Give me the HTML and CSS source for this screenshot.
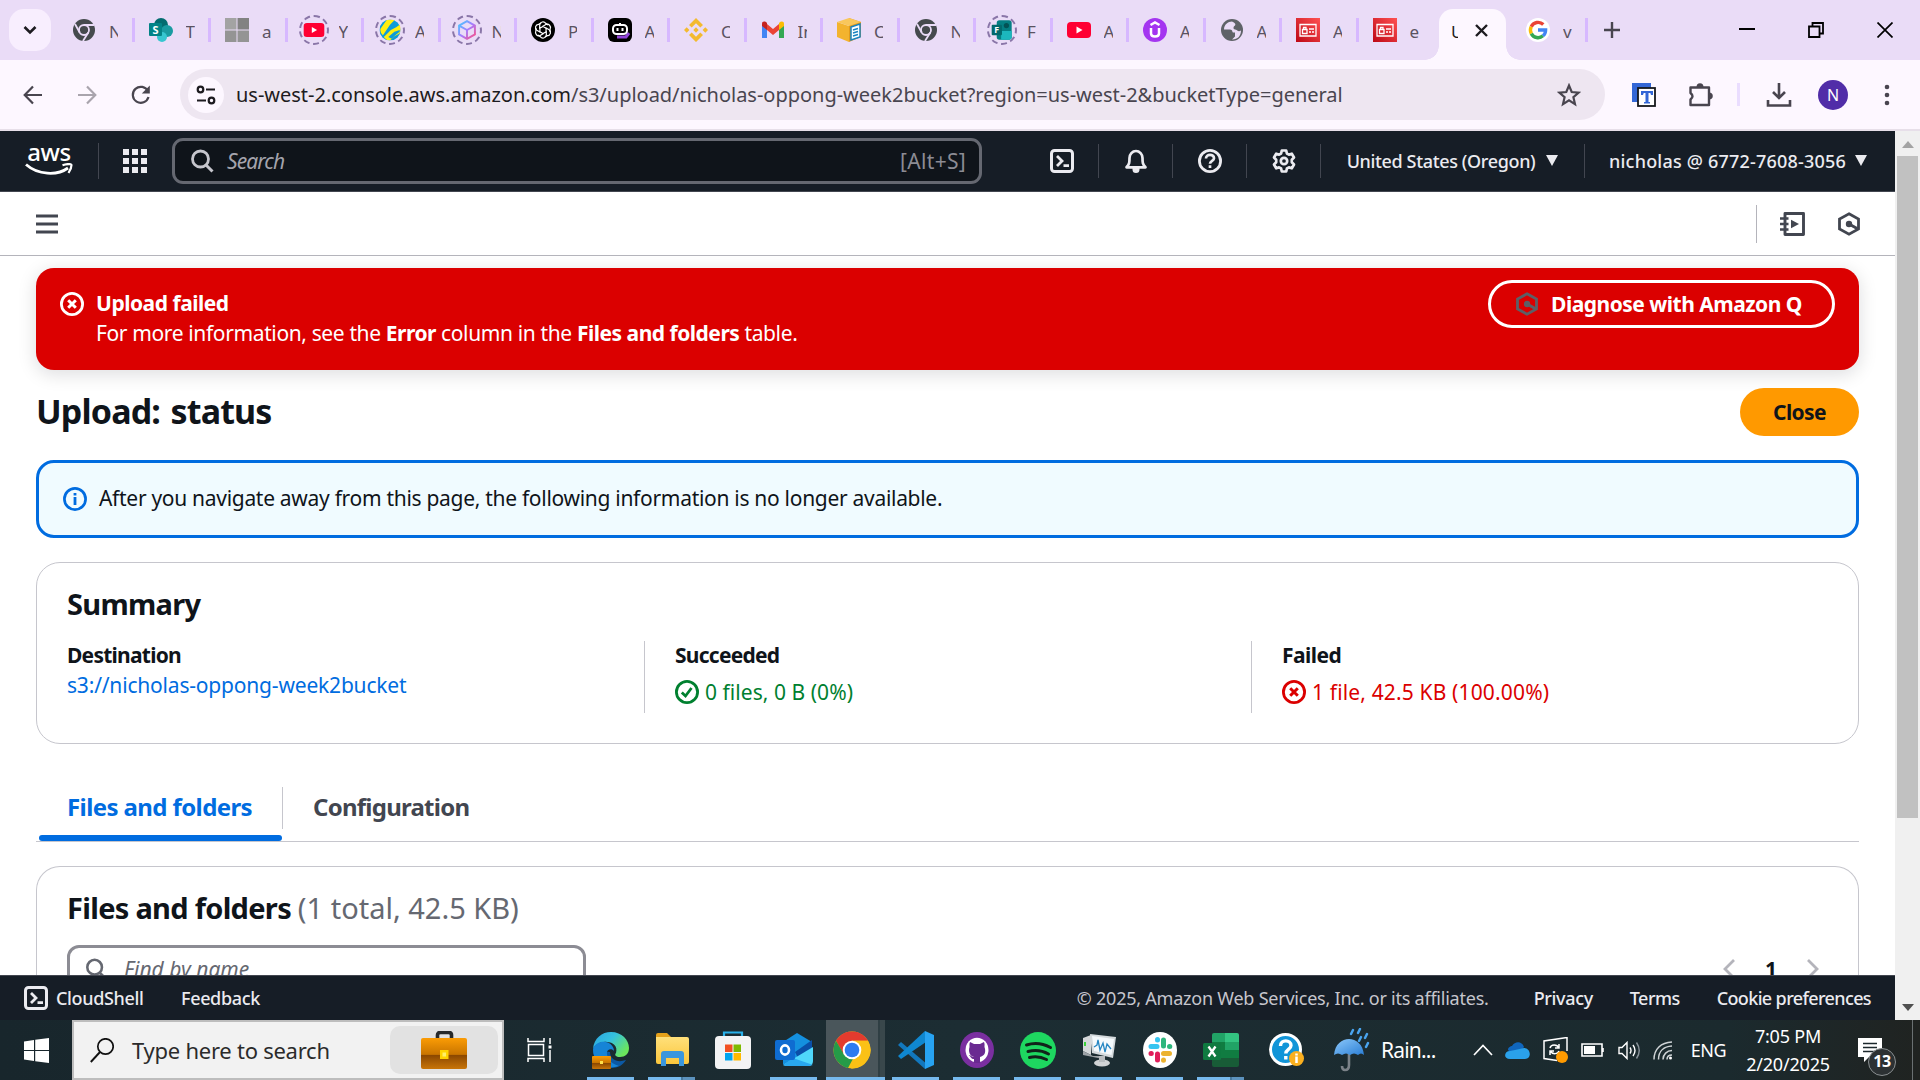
FILE: index.html
```html
<!DOCTYPE html>
<html lang="en">
<head>
<meta charset="utf-8">
<title>Upload objects - S3 bucket</title>
<link rel="stylesheet" href="styles.css">
</head>
<body>
<svg class="defs" aria-hidden="true">
  <defs>
    <linearGradient id="g-cube" x1="0" y1="0" x2="1" y2="1"><stop offset="0" stop-color="#3ccfff"/><stop offset=".5" stop-color="#a77bff"/><stop offset="1" stop-color="#ff4f7e"/></linearGradient>
    <linearGradient id="g-red" x1="0" y1="1" x2="1" y2="0"><stop offset="0" stop-color="#bd0816"/><stop offset="1" stop-color="#ff5252"/></linearGradient>
    <linearGradient id="g-bag" x1="0" y1="0" x2="0" y2="1"><stop offset="0" stop-color="#fb9c05"/><stop offset=".53" stop-color="#c97500"/><stop offset=".55" stop-color="#8a4700"/><stop offset="1" stop-color="#c97508"/></linearGradient>
    <linearGradient id="g-edge" x1="0" y1="0" x2="1" y2=".6"><stop offset="0" stop-color="#2aa5e0"/><stop offset=".5" stop-color="#35c1df"/><stop offset="1" stop-color="#6be65c"/></linearGradient>
    <linearGradient id="g-umb" x1="0" y1="0" x2="1" y2="1"><stop offset="0" stop-color="#8cc8fa"/><stop offset="1" stop-color="#2b7fd6"/></linearGradient>
    <linearGradient id="g-folder" x1="0" y1="0" x2="0" y2="1"><stop offset="0" stop-color="#ffe07a"/><stop offset="1" stop-color="#fbc63c"/></linearGradient>
  </defs>
  <symbol id="chrome-gray" viewBox="0 0 24 24"><circle cx="12" cy="12" r="11" fill="#454a4d"/><circle cx="12" cy="12" r="5" fill="#454a4d" stroke="#eadcf7" stroke-width="1.8"/><path d="M12 7h10M7.7 14.5 3 6M16.300 14.500 11 23" stroke="#eadcf7" stroke-width="1.8"/></symbol>
  <symbol id="youtube" viewBox="0 0 24 24"><rect y="4" width="24" height="16" rx="4" fill="#ff0033"/><path fill="#fff" d="m9.500 8.500 6 3.500-6 3.500z"/></symbol>
  <symbol id="idcard" viewBox="0 0 24 24"><rect width="24" height="24" fill="url(#g-red)"/><path fill="none" stroke="#fff" stroke-width="1.300" d="M4 6.500h16v11.500H4zM6.500 11.500h4.500v4H6.500zM7.500 11.500v-2h2.500v2M13 11h5M13 14h2M16 14h2"/></symbol>
  <symbol id="cloudshell" viewBox="0 0 24 24"><rect x="1.500" y="1.500" width="21" height="21" rx="3" fill="none" stroke="currentColor" stroke-width="3"/><path d="m7 7 5 5-5 5M13.500 16.700H19" fill="none" stroke="currentColor" stroke-width="2.800"/></symbol>
  <symbol id="q" viewBox="0 0 24 24"><path d="M12 1.800 21.500 7v10L12 22.200 2.500 17V7z" fill="none" stroke="currentColor" stroke-width="2.800"/><path d="m12 12 9 5" stroke="currentColor" stroke-width="3"/><circle cx="12" cy="12" r="3.200" fill="currentColor"/></symbol>
  <symbol id="lens" viewBox="0 0 24 24"><circle cx="10.500" cy="10" r="8" fill="none" stroke="currentColor" stroke-width="2.800"/><path d="m16 16 6.500 6.500" stroke="currentColor" stroke-width="3"/></symbol>
  <symbol id="fail" viewBox="0 0 24 24"><circle cx="12" cy="12" r="10.600" fill="none" stroke="currentColor" stroke-width="2.800"/><path d="m8.200 8.200 7.600 7.600m0-7.600-7.600 7.600" stroke="currentColor" stroke-width="3"/></symbol>
</svg>

<header class="tabstrip">
  <button class="tab-search"><svg width="14" height="10" viewBox="0 0 14 10"><path d="m1.500 2 5.500 5.500L12.500 2" fill="none" stroke="#1d1b20" stroke-width="2.600"/></svg></button>
  <nav class="tabs">
    <div class="tab"><span class="fav"><svg><use href="#chrome-gray"/></svg></span><span class="tl">N</span></div>
    <div class="tab"><span class="fav"><svg viewBox="0 0 24 24"><circle cx="12" cy="7" r="7" fill="#036c70"/><circle cx="18" cy="13" r="6" fill="#1a9ba1"/><circle cx="13" cy="19" r="5" fill="#37c6d0"/><rect y="5" width="13" height="13" rx="1" fill="#038387"/><text x="6.500" y="15.500" text-anchor="middle" font-size="11" font-weight="700" fill="#fff">S</text></svg></span><span class="tl">T</span></div>
    <div class="tab"><span class="fav"><svg viewBox="0 0 24 24"><path fill="#a3a3a3" d="M0 0h11.500v11.500H0z"/><path fill="#828282" d="M12.500 0H24v11.500H12.500z"/><path fill="#949494" d="M0 12.500h11.500V24H0zM12.500 12.500H24V24H12.500z"/></svg></span><span class="tl">a</span></div>
    <div class="tab"><span class="fav ring"><svg><use href="#youtube"/></svg></span><span class="tl">Y</span></div>
    <div class="tab"><span class="fav ring"><svg viewBox="0 0 24 24"><circle cx="12" cy="12" r="12" fill="#0d9bd8"/><path fill="#ffee10" d="M1 11 8 1q5-2 9 0L12 6 4 18q-3-2-3-7zM5 20 13 12l6-3 4-3q2 5 0 10l-6 3-5 5q-4 0-7-4z"/><path fill="#0d9bd8" d="m10 20 7-6 6-2v2l-5 4-4 4z"/></svg></span><span class="tl">A</span></div>
    <div class="tab"><span class="fav ring"><svg viewBox="0 0 24 24"><path d="M12 2 21 7v10l-9 5-9-5V7zM3 7l9 5 9-5M12 12v10" fill="none" stroke="url(#g-cube)" stroke-width="2.200"/></svg></span><span class="tl">N</span></div>
    <div class="tab"><span class="fav"><svg viewBox="0 0 24 24"><circle cx="12" cy="12" r="12" fill="#000"/><g fill="none" stroke="#fff" stroke-width="1.200"><path id="petal" d="M12 8.500 8.700 10.300V6.800a3.300 3.300 0 0 1 6-1.500L17 7"/><use href="#petal" transform="rotate(60 12 12)"/><use href="#petal" transform="rotate(120 12 12)"/><use href="#petal" transform="rotate(180 12 12)"/><use href="#petal" transform="rotate(240 12 12)"/><use href="#petal" transform="rotate(300 12 12)"/></g></svg></span><span class="tl">P</span></div>
    <div class="tab"><span class="fav"><svg viewBox="0 0 24 24"><rect width="24" height="24" rx="6" fill="#000"/><path d="M9 19h9l3-4" fill="none" stroke="#9146d8" stroke-width="3"/><rect x="5" y="7" width="14" height="9" rx="3.500" fill="none" stroke="#fff" stroke-width="2"/><path d="M12 5v2M9.500 10v3M14.500 10v3" stroke="#fff" stroke-width="2"/></svg></span><span class="tl">A</span></div>
    <div class="tab"><span class="fav"><svg viewBox="0 0 24 24"><path fill="#f3ba2f" d="m12 0 7 7-2.700 2.600L12 5.300 7.700 9.600 5 7zM12 24l7-7-2.700-2.600L12 18.700l-4.300-4.300L5 17zM12 9.300l2.700 2.700-2.700 2.700L9.300 12zM2.700 9.300 5.400 12l-2.700 2.700L0 12zM21.300 9.300 24 12l-2.700 2.700-2.700-2.700z"/></svg></span><span class="tl">C</span></div>
    <div class="tab"><span class="fav"><svg viewBox="0 0 24 24"><path fill="#4285f4" d="M1 7v13h5v-9z"/><path fill="#34a853" d="M23 7v13h-5v-9z"/><path fill="#ea4335" d="m6 6 6 5 6-5v6l-6 5-6-5z"/><path fill="#c5221f" d="M1 8V6c0-3 3-3 5-1v7z"/><path fill="#fbbc04" d="M23 8V6c0-3-3-3-5-1v7z"/></svg></span><span class="tl">In</span></div>
    <div class="tab"><span class="fav"><svg viewBox="0 0 24 24"><path fill="#e29b1b" d="m12 0 12 4v15l-12 5z"/><path fill="#f3b32e" d="m0 4 12 4v16L0 19z"/><path fill="#f9c75b" d="m0 4 12-4 12 4-12 4z"/><path fill="#fff" stroke="#1983c2" stroke-width="1.500" d="m14 9 9-3v13l-9 3z"/><path stroke="#1983c2" stroke-width="1.400" d="m16 12 5-1.500M16 15l5-1.500M16 18l5-1.500"/></svg></span><span class="tl">C</span></div>
    <div class="tab"><span class="fav"><svg><use href="#chrome-gray"/></svg></span><span class="tl">N</span></div>
    <div class="tab"><span class="fav ring"><svg viewBox="0 0 24 24"><rect x="6" y="1" width="17" height="22" rx="3" fill="#047f83"/><path fill="#1cb7bd" d="M11 13h12v7a3 3 0 0 1-3 3h-9z"/><circle cx="17" cy="7" r="3" fill="#035256"/><rect y="6" width="12" height="12" rx="1.500" fill="#02696d"/><text x="6" y="15.500" text-anchor="middle" font-size="10" font-weight="700" fill="#fff">F</text></svg></span><span class="tl">F</span></div>
    <div class="tab"><span class="fav"><svg><use href="#youtube"/></svg></span><span class="tl">A</span></div>
    <div class="tab"><span class="fav"><svg viewBox="0 0 24 24"><circle cx="12" cy="12" r="12" fill="#a435f0"/><path fill="none" stroke="#fff" stroke-width="2.500" d="m7.500 7 4.500-2.600L16.500 7M8 10v5.500c0 4 8 4 8 0V10"/></svg></span><span class="tl">A</span></div>
    <div class="tab"><span class="fav"><svg viewBox="0 0 24 24"><circle cx="12" cy="12" r="11" fill="#5f6368"/><path fill="#eadcf7" d="M12 3.500c-4 0-8 3-8 8h6c3 0 2 3 3 3h2v4l-3 3c6 0 9-4 9-9-3 2-4-1-6-1s-2-3 0-4c1-1 0-3-3-4z"/></svg></span><span class="tl">A</span></div>
    <div class="tab"><span class="fav"><svg><use href="#idcard"/></svg></span><span class="tl">A</span></div>
    <div class="tab last"><span class="fav"><svg><use href="#idcard"/></svg></span><span class="tl">e</span></div>
    <div class="tab active"><span class="tl">U</span><svg width="13" height="13" viewBox="0 0 13 13"><path d="m1 1 11 11M12 1 1 12" stroke="#1d1b20" stroke-width="2.400"/></svg></div>
    <div class="tab after"><span class="fav"><svg viewBox="0 0 24 24"><circle cx="12" cy="12" r="12" fill="#fff"/><g fill="none" stroke-width="3.400"><path stroke="#ea4335" d="M5.200 8.700A7.600 7.600 0 0 1 17.300 6.500"/><path stroke="#fbbc05" d="M5.300 15.600a7.600 7.600 0 0 1-.1-6.900"/><path stroke="#34a853" d="M17 17.800A7.600 7.600 0 0 1 5.300 15.600"/><path stroke="#4285f4" d="M12 12h7.600c0 2.500-1 4.500-2.600 5.800"/></g></svg></span><span class="tl">v</span></div>
  </nav>
  <svg class="plus" width="16" height="16" viewBox="0 0 16 16"><path d="M8 0v16M0 8h16" stroke="#49454f" stroke-width="2.400"/></svg>
  <div class="win">
    <svg width="16" height="16" viewBox="0 0 16 16"><path d="M0 7h16" stroke="#000" stroke-width="2"/></svg>
    <svg width="16" height="16" viewBox="0 0 16 16"><path d="M1 4.500h10.500V15H1zM4.500 4.500V1H15v10.500h-3.500" fill="none" stroke="#000" stroke-width="1.800"/></svg>
    <svg width="16" height="16" viewBox="0 0 16 16"><path d="m.5.500 15 15m0-15-15 15" stroke="#000" stroke-width="1.700"/></svg>
  </div>
</header>

<div class="toolbar">
  <div class="nav-icons">
    <svg viewBox="0 0 20 20"><path d="M19 10H2m8-8.500L1.700 10l8.300 8.500" fill="none" stroke="#49454f" stroke-width="2.200"/></svg>
    <svg viewBox="0 0 20 20"><path d="M1 10h17m-8-8.500L18.300 10 10 18.500" fill="none" stroke="#a9a4ad" stroke-width="2.200"/></svg>
    <svg viewBox="0 0 20 20"><path d="M17.500 12A8 8 0 1 1 17 6.300" fill="none" stroke="#49454f" stroke-width="2.200"/><path d="M18.800.5v8h-8z" fill="#49454f"/></svg>
  </div>
  <div class="omnibox">
    <span class="tune"><svg width="20" height="20" viewBox="0 0 20 20" fill="none" stroke="#1d1b20" stroke-width="2.200"><circle cx="4.500" cy="4.500" r="2.800"/><path d="M10 4.500h9M1 15.500h9"/><circle cx="15.500" cy="15.500" r="2.800"/></svg></span>
    <span class="url"><b>us-west-2.console.aws.amazon.com</b>/s3/upload/nicholas-oppong-week2bucket?region=us-west-2&amp;bucketType=general</span>
    <svg width="24" height="24" viewBox="0 0 24 24"><path d="m12 2.500 2.700 6.500 7 .6-5.300 4.600 1.600 6.900-6-3.700-6 3.700 1.600-6.900L2.300 9.600l7-.6z" fill="none" stroke="#49454f" stroke-width="2.200"/></svg>
  </div>
  <div class="tools">
    <svg class="t-ext" width="26" height="26" viewBox="0 0 26 26"><path fill="#3367d6" d="M1 1h19v5H7v14H1z"/><rect x="7" y="6" width="17" height="18" fill="#fff" stroke="#16181c" stroke-width="1.800"/><path fill="#3367d6" d="M10 9h12v4h-2l-.7-2H17.500v9h1.500v1.500h-6V20h1.500v-9h-1.800l-.7 2h-2z"/></svg>
    <svg class="t-puz" width="26" height="26" viewBox="0 0 26 26"><path d="M2.500 5.500h18.500V23H2.500v-5.500q4-3.300 0-6.500z" fill="none" stroke="#49454f" stroke-width="2.400" stroke-linejoin="round"/><path fill="#49454f" d="M8.500 5a3.500 3.800 0 0 1 7 0zM21 10.500a3.800 3.500 0 0 1 0 7z"/></svg>
    <i></i>
    <svg class="t-dl" width="26" height="26" viewBox="0 0 26 26"><path d="M13 1v15m-6-6 6 6 6-6M2 18v5.500h22V18" fill="none" stroke="#49454f" stroke-width="2.600"/></svg>
    <span class="avatar">N</span>
    <svg class="t-dots" width="6" height="22" viewBox="0 0 6 22" fill="#49454f"><circle cx="3" cy="3" r="2.300"/><circle cx="3" cy="11" r="2.300"/><circle cx="3" cy="19" r="2.300"/></svg>
  </div>
</div>

<div class="viewport">
  <div class="page">
    <header class="aws-nav">
      <div class="logo"><span>aws</span><svg width="48" height="14" viewBox="0 0 48 14"><path d="M1 1.500C13 12 32 13 43 5" fill="none" stroke="#fff" stroke-width="2.800"/><path d="M37.500 2.200c4-1.500 9-1.500 9-.2 0 2-1 5-3 8" fill="none" stroke="#fff" stroke-width="2.200"/></svg></div>
      <i class="sep"></i>
      <svg class="apps" width="24" height="24" viewBox="0 0 24 24" fill="#ebebf0"><path d="M0 0h6v6H0zM9 0h6v6H9zM18 0h6v6h-6zM0 9h6v6H0zM9 9h6v6H9zM18 9h6v6h-6zM0 18h6v6H0zM9 18h6v6H9zM18 18h6v6h-6z"/></svg>
      <div class="nav-search"><svg width="24" height="24"><use href="#lens"/></svg><em>Search</em><span>[Alt+S]</span></div>
      <div class="nav-cells">
        <span class="cell"><svg width="24" height="24"><use href="#cloudshell"/></svg></span>
        <span class="cell"><svg width="24" height="24" viewBox="0 0 24 24"><path d="M2.500 18.300c3-3 3-5 3-9.300a6.500 7 0 0 1 13 0c0 4.300 0 6.300 3 9.300z" fill="none" stroke="currentColor" stroke-width="2.700" stroke-linejoin="round"/><path d="M8.500 19v1.500a3.500 3.500 0 0 0 7 0V19z" fill="currentColor"/></svg></span>
        <span class="cell"><svg width="24" height="24" viewBox="0 0 24 24"><circle cx="12" cy="12" r="10.600" fill="none" stroke="currentColor" stroke-width="2.800"/><path d="M8 9.500c0-5 8-4.800 8-.3 0 2.800-4 2.500-4 5.600M12 16.300v2.800" fill="none" stroke="currentColor" stroke-width="2.700"/></svg></span>
        <span class="cell"><svg width="24" height="24" viewBox="0 0 24 24" fill="none" stroke="currentColor" stroke-width="2.700" stroke-linejoin="round"><path d="M9.800 1.500h4.400l.7 3 2 1.100 2.900-.9 2.200 3.800-2.200 2.200v2.600l2.200 2.200-2.200 3.800-2.900-.9-2 1.100-.7 3H9.800l-.7-3-2-1.100-2.900.9L2 15.500l2.200-2.200v-2.600L2 8.500l2.200-3.800 2.900.9 2-1.100z"/><circle cx="12" cy="12" r="3.200"/></svg></span>
        <span class="region">United States (Oregon)<svg width="12" height="11" viewBox="0 0 12 11"><path d="M0 0h12L6 11z" fill="currentColor"/></svg></span>
        <span class="account">nicholas @ 6772-7608-3056<svg width="12" height="11" viewBox="0 0 12 11"><path d="M0 0h12L6 11z" fill="currentColor"/></svg></span>
      </div>
    </header>

    <div class="crumbs">
      <svg width="22" height="20" viewBox="0 0 22 20"><path d="M0 2h22M0 10h22M0 18h22" stroke="#424650" stroke-width="2.800"/></svg>
      <div class="panel-tools">
        <svg width="25" height="24" viewBox="0 0 25 24"><path d="M5 1.500h18.500v21H5z" fill="none" stroke="#424650" stroke-width="2.900" stroke-linejoin="round"/><path d="M0 6.500h8.500M0 12h8.500M0 17.500h8.500" stroke="#424650" stroke-width="2.600"/><path fill="#424650" d="m11 7.800 8 4.200-8 4.200z"/></svg>
        <svg width="24" height="24"><use href="#q"/></svg>
      </div>
    </div>

    <main>
      <section class="flash">
        <svg width="24" height="24"><use href="#fail"/></svg>
        <div class="flash-text">
          <strong class="flash-title">Upload failed</strong>
          <p>For more information, see the <b>Error</b> column in the <b>Files and folders</b> table.</p>
        </div>
        <button class="diagnose"><svg width="24" height="24"><use href="#q"/></svg><span>Diagnose with Amazon Q</span></button>
      </section>

      <div class="title-row"><h1>Upload: status</h1><button class="close">Close</button></div>

      <div class="info">
        <svg width="24" height="24" viewBox="0 0 24 24"><circle cx="12" cy="12" r="10.600" fill="none" stroke="#006ce0" stroke-width="2.700"/><path d="M12 10v8M12 6v2.500" stroke="#006ce0" stroke-width="2.800"/></svg>
        <span>After you navigate away from this page, the following information is no longer available.</span>
      </div>

      <section class="card summary">
        <h2>Summary</h2>
        <div class="cols">
          <div class="col"><b>Destination</b><a>s3://nicholas-oppong-week2bucket</a></div>
          <div class="col"><b>Succeeded</b><span class="status ok"><svg width="24" height="24" viewBox="0 0 24 24"><circle cx="12" cy="12" r="10.600" fill="none" stroke="currentColor" stroke-width="2.800"/><path d="m6.800 12.500 3.700 3.500 6-8" fill="none" stroke="currentColor" stroke-width="2.800"/></svg>0 files, 0 B (0%)</span></div>
          <div class="col"><b>Failed</b><span class="status bad"><svg width="24" height="24"><use href="#fail"/></svg>1 file, 42.5 KB (100.00%)</span></div>
        </div>
      </section>

      <nav class="page-tabs"><span class="on"><b>Files and folders</b></span><span class="off"><b>Configuration</b></span></nav>

      <section class="card files">
        <h2>Files and folders <span>(1 total, 42.5 KB)</span></h2>
        <div class="files-row">
          <div class="find"><svg width="22" height="22"><use href="#lens"/></svg><em>Find by name</em></div>
          <div class="pager">
            <svg width="13" height="20" viewBox="0 0 13 20"><path d="m11 1-9 9 9 9" fill="none" stroke="#b4b4bb" stroke-width="2.800"/></svg>
            <b>1</b>
            <svg width="13" height="20" viewBox="0 0 13 20"><path d="m2 1 9 9-9 9" fill="none" stroke="#b4b4bb" stroke-width="2.800"/></svg>
          </div>
        </div>
      </section>
    </main>

    <footer class="aws-foot">
      <svg width="24" height="24"><use href="#cloudshell"/></svg>
      <span class="f-cs">CloudShell</span><span class="f-fb">Feedback</span>
      <span class="f-copy">© 2025, Amazon Web Services, Inc. or its affiliates.</span>
      <span class="f-pr">Privacy</span><span class="f-te">Terms</span><span class="f-co">Cookie preferences</span>
    </footer>
  </div>
  <div class="scroll">
    <svg width="12" height="7" viewBox="0 0 12 7"><path d="M0 7h12L6 0z" fill="#a3a3a3"/></svg>
    <div class="thumb"></div>
    <svg width="12" height="7" viewBox="0 0 12 7"><path d="M0 0h12L6 7z" fill="#505050"/></svg>
  </div>
</div>

<footer class="taskbar">
  <div class="start"><svg width="25" height="25" viewBox="0 0 25 25" fill="#fff"><path d="M0 3.400 10 2v9.900H0zM11.200 1.800 25 0v11.900H11.200zM0 13.100h10V23L0 21.600zM11.200 13.100H25V25l-13.800-1.800z"/></svg></div>
  <div class="tb-search">
    <svg width="24" height="25" viewBox="0 0 24 25"><circle cx="15.500" cy="8.500" r="7.700" fill="none" stroke="#111" stroke-width="1.700"/><path d="M10 14 .8 24" stroke="#111" stroke-width="1.900"/></svg>
    <span>Type here to search</span>
    <div class="promo"><svg width="46" height="38" viewBox="0 0 46 38"><path d="M16.500 8V4q0-2.500 3-2.500h8q3 0 3 2.500v4" fill="none" stroke="#26292b" stroke-width="3.600"/><rect y="7" width="46" height="31" rx="2" fill="url(#g-bag)"/><rect x="19" y="19" width="8.500" height="9" fill="#ffd400"/><rect x="21.500" y="21.500" width="3.500" height="4" fill="#fff06a"/></svg></div>
  </div>
  <div class="task tv"><svg width="26" height="24" viewBox="0 0 26 24" fill="none" stroke="#fff" stroke-width="1.500"><path d="M1 0v3.500h16V0M1 24v-3.500h16V24M1.500 6.500h15v11h-15zM23 0v6M23 12v12"/><path d="M21.500 9h3" stroke-width="3"/></svg></div>
  <div class="task run"><svg width="38" height="38" viewBox="0 0 38 38"><path fill="#0c59a4" d="M1 19c0 11 9 18 18 18 7 0 12-3 15-8-8 3-16 0-16-8z"/><path fill="url(#g-edge)" d="M1 18C2 7 10 1 19 1c11 0 18 8 18 16 0 6-4 9-9 9-4 0-6-2-4-4 2-7-3-11-9-11-6-1-12 3-14 7z"/><path fill="#1684d6" d="M1 18c2-6 8-8 13-7 5 1 8 5 8 9-2-3-8-2-7 3 1 8 7 10 12 12-15 5-26-4-26-17z"/><rect y="25" width="19" height="13" rx="1" fill="url(#g-bag)"/><rect x="8" y="30" width="3" height="3" fill="#ffe14a"/></svg></div>
  <div class="task run pair"><svg width="34" height="34" viewBox="0 0 34 34"><path fill="#e5a11a" d="M1 2q0-2 2-2h9l4 4H1z"/><path fill="url(#g-folder)" d="M1 4h31q2 0 2 2v23q0 2-2 2H3q-2 0-2-2z"/><path fill="#3a96dd" d="M6 33V21q0-3 3-3h17q3 0 3 3v12h-5v-8H11v8z"/></svg></div>
  <div class="task"><svg width="36" height="38" viewBox="0 0 36 38"><path d="M9 8V1.500h18V8" fill="none" stroke="#29b1ea" stroke-width="2.200"/><rect y="5" width="36" height="33" rx="4" fill="#f3f3f4"/><path fill="#f25022" d="M10 13.500h7.500V21H10z"/><path fill="#7fba00" d="M18.500 13.500H26V21h-7.500z"/><path fill="#00a4ef" d="M10 22h7.500v7.500H10z"/><path fill="#ffb900" d="M18.500 22H26v7.500h-7.500z"/></svg></div>
  <div class="task run"><svg width="38" height="34" viewBox="0 0 38 34"><path fill="#1490df" d="m8 9 14-9 15 9v7L18 31H8z"/><path fill="#0a4fa8" d="m20 19 17-12v10L24 27z"/><path fill="#4fd7fb" d="m8 32 30-18v14q0 5-5 5H11z"/><path fill="#29a8ef" d="m8 32 10-7 20 7-4 1H11z"/><rect y="7" width="20" height="20" rx="2" fill="#0f6cd1"/><ellipse cx="10" cy="17" rx="4" ry="4.600" fill="none" stroke="#fff" stroke-width="2.600"/></svg></div>
  <div class="task run chrome"><svg width="38" height="38" viewBox="0 0 38 38"><circle cx="19" cy="19" r="18.500" fill="#fbc116"/><path fill="#e33b2e" d="M3 9.700A18.500 18.500 0 0 1 35 9.700H19L11 24z"/><path fill="#259b48" d="M3 9.700 11 23.600 19 28l1-.2-5 9.200A18.500 18.500 0 0 1 3 9.700z"/><path fill="#fbc116" d="M19 9.700h16a18.500 18.500 0 0 1-17 27.800l9-13.700z"/><circle cx="19" cy="19" r="9.300" fill="#fff"/><circle cx="19" cy="19" r="7.300" fill="#2d7bf0"/></svg></div>
  <div class="task run"><svg width="36" height="38" viewBox="0 0 36 38"><path fill="#1277bd" d="M3 11 30 34l-3 4L0 14z"/><path fill="#0f87d0" d="M0 25 27 0l1 11L3 28z"/><path fill="#27a3f2" d="m27 0 9 4v30l-9 4z"/></svg></div>
  <div class="task run"><svg width="34" height="36" viewBox="0 0 34 36"><ellipse cx="17" cy="18" rx="17" ry="18" fill="#7a2fa0"/><ellipse cx="17" cy="18" rx="11.500" ry="12.200" fill="#fff"/><path fill="#6a2a91" d="M10 10l4 2h6l4-2q1 2 .5 5c2 6-.5 9-4.500 10v6h-6v-4c-3 0-3-2-5-4 2 0 2 2 5 2-4-1-6-5-4.500-10Q9 12 10 10z"/></svg></div>
  <div class="task run"><svg width="36" height="37" viewBox="0 0 36 37"><ellipse cx="18" cy="18.500" rx="18" ry="18.500" fill="#1ed760"/><path d="M6.500 13q12-4 24 2.500M8 19.500q11-3 20.500 2.500M9.500 25.500q9-2 17 2" fill="none" stroke="#11231a" stroke-width="3" stroke-linecap="round"/></svg></div>
  <div class="task run"><svg width="34" height="34" viewBox="0 0 34 34"><path fill="#d5d8da" d="M1 5 9 2v20l-8-4z"/><path fill="#3bd13b" d="M2 9h2v4H2z"/><path fill="#9da3a7" d="m1 18 10 5h10v3L1 22z"/><path fill="#d4dadd" d="m8 1 26 3-3 21-21-5z"/><path fill="#f4f9fc" d="m10 3 22 3-2.500 16L12 18z"/><path d="m12 14 3-2 1-5 2 10 3-7 2 9 2-8 4 5" fill="none" stroke="#2687c3" stroke-width="1.300"/><ellipse cx="20" cy="30" rx="8" ry="3.500" fill="#d2d4d6"/><path fill="#b9bdc0" d="M17 23h6v6h-6z"/></svg></div>
  <div class="task run"><svg width="34" height="36" viewBox="0 0 34 36"><ellipse cx="17" cy="18" rx="17" ry="18" fill="#fff"/><g fill="none" stroke-width="5" stroke-linecap="round"><path stroke="#36c5f0" d="M8 14.500h6M14.500 7.500v.5"/><path stroke="#2eb67d" d="M20.500 8v6M26.500 14.500h.3"/><path stroke="#e01e5a" d="M14.500 22v6M8 21.500h.3"/><path stroke="#ecb22e" d="M20.500 21.500h6M20.500 28v.3"/></g></svg></div>
  <div class="task run pair"><svg width="36" height="34" viewBox="0 0 36 34"><path fill="#21a366" d="M9 2q0-2 2-2h11v9H9z"/><path fill="#33c481" d="M22 0h12q2 0 2 2v7H22z"/><path fill="#107c41" d="M9 9h13v16H9z"/><path fill="#21a366" d="M22 9h14v8H22z"/><path fill="#107c41" d="M22 17h14v8H22z"/><path fill="#185c37" d="M9 25h27v7q0 2-2 2H11q-2 0-2-2z"/><rect y="10" width="18" height="17" rx="1.500" fill="#0f7a40"/><path d="m5.500 13.500 7 10m0-10-7 10" stroke="#fff" stroke-width="2.300"/></svg></div>
  <div class="task help"><svg width="38" height="34" viewBox="0 0 38 34"><circle cx="16.500" cy="16.500" r="15" fill="#1295d8" stroke="#fff" stroke-width="3"/><path d="M11.500 13c0-7 10.500-6.500 10.500-.5 0 4-5.200 3.800-5.200 8M16.800 23v3.500" fill="none" stroke="#fff" stroke-width="3.400"/><circle cx="27.500" cy="25.500" r="7.500" fill="#fbb01f"/><path d="M27.500 23.500V30M27.500 20.500v2" stroke="#fff" stroke-width="2.500"/></svg></div>
  <div class="weather"><svg width="36" height="44" viewBox="0 0 36 44"><path d="M15 23v14q0 5-4 5-3 0-3-4" fill="none" stroke="#7b8288" stroke-width="2.600"/><path fill="url(#g-umb)" d="M0 27C1 16 8 11 15 11s14 5 15 16q-3-3-6 0-4-3-8 0-4-3-8 0-4-3-8 0z"/><path d="m17 6 2-4M24 5l2-4M25 13l2-4M31 10l2-4M32 19l2-4" stroke="#4aa5f0" stroke-width="2.500" stroke-linecap="round"/></svg><span>Rain...</span></div>
  <div class="tray">
    <svg width="20" height="12" viewBox="0 0 20 12"><path d="m1 11 9-9.500L19 11" fill="none" stroke="#fff" stroke-width="1.700"/></svg>
    <svg width="25" height="17" viewBox="0 0 25 17"><path fill="#1066bd" d="M3 8c0-3 3-4 4-4 3-5 10-5 12 1l-8 10z"/><path fill="#2aa1ea" d="M5 17c-7 0-6-8 0-8l5-1 9-2c7 0 8 11 1 11z"/></svg>
    <svg width="26" height="26" viewBox="0 0 26 26" fill="none" stroke="#fff" stroke-width="1.500"><path d="M14 23.500 1 21.500V4l23-3.500V14"/><path d="M7 11c1-4 7-4 9 0m0-4v4h-4M16 14c-1 3-6 4-9 0m0 4v-4h4"/><circle cx="19" cy="20" r="6" fill="#ff9a00" stroke="none"/></svg>
    <svg width="24" height="14" viewBox="0 0 24 14"><path d="M1 1h20v12H1zM22 5v4" fill="none" stroke="#fff" stroke-width="1.600"/><path fill="#fff" d="M3 3h11v8H3z"/></svg>
    <svg width="23" height="19" viewBox="0 0 23 19" fill="none" stroke="#fff" stroke-width="1.400"><path d="M1 6.500h3L9 1.500v16l-5-5H1zM12 6.500q2 3 0 6M15 4q4 5.500 0 11"/><path d="M18.500 1.500q5.500 8 0 16" stroke="#89929a"/></svg>
    <svg width="20" height="19" viewBox="0 0 20 19" fill="none" stroke="#cfd4d6" stroke-width="1.500"><path d="M1 18.500C1 8 8 1.500 19 1M5.500 18.500C5.500 10 11 5.500 19 5M10 18.500c0-5 4-9 9-9"/><path d="M14 18.500c0-3 2-4.500 5-4.500"/><circle cx="17.500" cy="17" r="1.500" fill="#fff" stroke="none"/></svg>
    <span class="lang">ENG</span>
  </div>
  <div class="clock"><span>7:05 PM</span><span>2/20/2025</span></div>
  <div class="notif"><svg width="24" height="25" viewBox="0 0 24 25"><path fill="#fff" d="M0 0h24v19H11l-5 5v-5H0z"/><path d="M5 5.500h14M5 9.500h14M5 13.500h14" stroke="#1c282c" stroke-width="1.600"/></svg><b>13</b></div>
  <i class="peek"></i>
</footer>
</body>
</html>
```
FILE: styles.css
```css
* { box-sizing: border-box; }
body { margin: 0; width: 1920px; height: 1080px; overflow: hidden; display: flex; flex-direction: column; background: #fff; font-family: "Noto Sans", sans-serif; color: #0f141a; white-space: nowrap; }
button { font: inherit; border: 0; padding: 0; display: flex; align-items: center; justify-content: center; }
svg { display: block; flex: none; }
h1, h2, p { margin: 0; }
i { display: block; flex: none; }
.defs { position: absolute; width: 0; height: 0; }

/* browser tabs */
.tabstrip { height: 60px; flex: none; display: flex; align-items: center; background: #eadcf7; padding-left: 9px; }
.tab-search { width: 42px; height: 42px; border-radius: 15px; background: #f8eefe; margin-right: 7px; }
.tabs { display: flex; height: 60px; }
.tab { width: 76.5px; flex: none; display: flex; align-items: center; padding-left: 14px; background: linear-gradient(#d7b8ff, #d7b8ff) right 0 center / 3px 24px no-repeat; }
.tab.last { background: none; width: 80.500px; }
.fav { width: 24px; height: 24px; position: relative; }
.fav svg { width: 24px; height: 24px; }
.ring svg { transform: scale(.88); }
.ring::after { content: ""; position: absolute; inset: -3px; border: 2px dashed #8a76a8; border-radius: 50%; }
.tl { width: 9px; margin-left: 13px; overflow: hidden; font-size: 17px; color: #5a5361; height: 25px; line-height: 28px; }
.tab.active { width: 67px; height: 51px; margin-top: 9px; background: #fdf7ff; border-radius: 14px 14px 0 0; padding: 0 0 9px 12px; position: relative; }
.tab.active::before, .tab.active::after { content: ""; position: absolute; bottom: 0; width: 14px; height: 14px; }
.tab.active::before { left: -14px; background: radial-gradient(circle at 0 0, transparent 13.500px, #fdf7ff 14px); }
.tab.active::after { right: -14px; background: radial-gradient(circle at 100% 0, transparent 13.500px, #fdf7ff 14px); }
.tab.active .tl { margin-left: 0; width: 7px; margin-right: 17px; color: #1d1b20; }
.tab.after { width: 82px; padding-left: 20px; }
.plus { margin-left: 16px; }
.win { margin-left: auto; display: flex; gap: 53px; padding-right: 27px; }

/* browser toolbar */
.toolbar { height: 71px; flex: none; display: flex; align-items: center; background: #fdf7ff; border-bottom: 2px solid #e7dfe9; }
.nav-icons { display: flex; gap: 34px; padding-left: 23px; width: 180px; }
.nav-icons svg { width: 20px; height: 20px; }
.omnibox { width: 1425px; height: 51px; border-radius: 26px; background: #eee6f1; display: flex; align-items: center; padding: 0 24px 0 8px; }
.tune { width: 36px; height: 36px; border-radius: 50%; background: #fdf7ff; display: flex; align-items: center; justify-content: center; margin-right: 12px; }
.url { flex: 1; font-size: 20px; letter-spacing: -.02px; color: #49454f; }
.url b { font-weight: 400; color: #1d1b20; }
.tools { display: flex; align-items: center; height: 51px; }
.t-ext { margin-left: 26px; }
.t-puz { margin-left: 31px; }
.tools i { width: 3px; height: 23px; background: #eaddff; margin-left: 23px; }
.t-dl { margin-left: 26px; }
.avatar { width: 30px; height: 30px; border-radius: 50%; background: #512da8; color: #fff; font-size: 16px; text-align: center; line-height: 30px; margin-left: 26px; }
.t-dots { margin-left: 36px; }

/* web page */
.viewport { height: 889px; display: flex; flex: none; }
.page { width: 1895px; height: 889px; display: flex; flex-direction: column; }
.aws-nav { height: 61px; flex: none; background: #161d26; border-bottom: 1px solid #424650; color: #ebebf0; display: flex; align-items: center; }
.logo { width: 48px; margin-left: 25px; height: 32px; color: #fff; }
.logo span { display: block; height: 18px; line-height: 13px; font-size: 24px; font-weight: 500; text-align: center; letter-spacing: -.4px; }
.sep { width: 1px; height: 36px; background: #424650; margin: 0 24px 0 25px; }
.nav-search { width: 810px; height: 46px; margin-left: 25px; border: 3px solid #656871; border-radius: 11px; background: #0f141a; display: flex; align-items: center; padding: 0 13px 0 15px; color: #c6c6cd; }
.nav-search em { font-size: 21px; letter-spacing: -.9px; margin-left: 13px; color: #a4a4ad; flex: 1; }
.nav-search span { font-size: 21px; color: #8c8c94; letter-spacing: .3px; }
.nav-cells { display: flex; align-items: center; margin-left: 43px; font-size: 18px; font-weight: 500; }
.nav-cells > * { height: 34px; display: flex; align-items: center; justify-content: center; padding-bottom: 1px; }
.nav-cells > .cell { width: 74px; border-right: 1px solid #424650; padding-bottom: 0; }
.region { width: 264px; border-right: 1px solid #424650; letter-spacing: -.36px; gap: 11px; }
.account { width: 303px; letter-spacing: .2px; gap: 9px; padding-left: 3px; }
.crumbs { height: 64px; flex: none; border-bottom: 1px solid #b4b4bb; display: flex; align-items: center; justify-content: space-between; padding: 0 34px 0 36px; color: #424650; }
.panel-tools { display: flex; gap: 32px; border-left: 1px solid #b4b4bb; height: 38px; align-items: center; padding-left: 23px; }
main { flex: 1; min-height: 0; overflow: hidden; padding: 12px 36px 0; font-size: 21px; }
.flash { height: 102px; border-radius: 18px; background: #db0000; color: #fff; display: flex; padding: 12px 24px; box-shadow: 0 4px 18px 1px rgba(0, 7, 22, .13); }
.flash > svg { margin-top: 12px; }
.flash-text { margin-left: 12px; padding-top: 8px; line-height: 30px; letter-spacing: -.37px; flex: 1; }
.flash-title { display: block; letter-spacing: -.48px; }
.flash b { letter-spacing: -.49px; }
.diagnose { width: 347px; height: 48px; border: 3px solid #fff; border-radius: 24px; background: none; color: #fff; font-weight: 700; letter-spacing: -.51px; gap: 12px; padding-right: 6px; }
.diagnose svg { color: #5c5f66; }
.diagnose span { padding-bottom: 1px; }
.title-row { display: flex; justify-content: space-between; align-items: center; height: 48px; margin-top: 18px; }
h1 { font-size: 34px; letter-spacing: -.85px; word-spacing: 2.500px; padding-bottom: 2px; }
.close { width: 119px; height: 48px; border-radius: 24px; background: #ff9900; color: #0f141a; font-weight: 700; letter-spacing: -.6px; padding-bottom: 1px; }
.info { height: 78px; margin-top: 24px; border: 3px solid #006ce0; border-radius: 18px; background: #f0fbff; display: flex; align-items: center; padding-left: 24px; gap: 12px; letter-spacing: -.295px; }
.info span { padding-bottom: 2px; }
.card { border: 1px solid #c6c6cd; border-radius: 24px; padding: 0 30px; }
.summary { height: 182px; margin-top: 24px; padding-top: 21px; }
h2 { font-size: 29px; line-height: 40px; letter-spacing: -.7px; }
.cols { display: grid; grid-template-columns: 577px 607px 1fr; margin-top: 17px; }
.col { height: 72px; line-height: 30px; }
.col b { display: block; letter-spacing: -.75px; margin-top: -1px; }
.col + .col { border-left: 1px solid #c6c6cd; padding-left: 30px; }
.col:last-child b { letter-spacing: -.55px; }
.col a { color: #006ce0; letter-spacing: -.19px; display: block; }
.status { display: flex; align-items: center; gap: 6px; height: 43px; letter-spacing: .15px; }
.ok { color: #00802f; letter-spacing: .05px; }
.bad { color: #db0000; }
.page-tabs { display: flex; height: 73px; margin-top: 25px; border-bottom: 1px solid #c6c6cd; font-size: 24px; color: #424650; letter-spacing: -.6px; }
.page-tabs span { padding: 18px 30px 0; height: 73px; position: relative; }
.page-tabs b { display: block; line-height: 39px; }
.page-tabs .on { width: 247px; padding-left: 31px; color: #006ce0; background: linear-gradient(#c6c6cd, #c6c6cd) 246px 18px / 1px 42px no-repeat; }
.page-tabs .on::after { content: ""; position: absolute; left: 3px; right: 1px; bottom: 1px; height: 6px; border-radius: 3px; background: #006ce0; }
.page-tabs .off { letter-spacing: -.75px; }
.files { height: 300px; margin-top: 24px; padding-top: 21px; border-bottom: 0; }
.files h2 span { font-weight: 400; color: #656871; letter-spacing: 0; }
.files-row { display: flex; justify-content: space-between; margin-top: 17px; }
.find { width: 519px; height: 48px; border: 3px solid #8c8c94; border-radius: 12px; display: flex; align-items: center; padding-left: 15px; gap: 17px; color: #656871; }
.find em { letter-spacing: 0; }
.pager { display: flex; align-items: center; padding-right: 9px; height: 48px; gap: 29px; }
.aws-foot { height: 45px; flex: none; background: #161d26; border-top: 1px solid #424650; color: #ebebf0; font-size: 18px; font-weight: 500; display: flex; align-items: center; padding: 0 24px; letter-spacing: -.35px; }
.aws-foot span { padding-bottom: 1px; }
.f-cs { margin-left: 8px; width: 125px; }
.f-copy { margin-left: auto; color: #c6c6cd; font-weight: 400; letter-spacing: -.23px; }
.f-pr { margin-left: 45px; }
.f-te { margin-left: 37px; letter-spacing: -.55px; }
.f-co { margin-left: 37px; letter-spacing: -.63px; }
.scroll { width: 25px; background: #f0f0f0; display: flex; flex-direction: column; align-items: center; justify-content: space-between; padding: 10px 0 9px; }
.thumb { width: 21px; height: 662px; background: #c1c1c1; margin-bottom: auto; margin-top: 8px; }

/* Windows taskbar */
.taskbar { height: 60px; flex: none; background: linear-gradient(90deg, #18262c, #1c2d33 50%, #1b2a2e 90%, #202321); display: flex; color: #fff; }
.start { width: 72px; display: flex; align-items: center; justify-content: center; }
.tb-search { width: 432px; border: 2px solid #bdbdbd; background: #f2f2f2; display: flex; align-items: center; padding: 0 4px 0 16px; color: #2b2b2b; font-size: 22px; letter-spacing: -.25px; }
.tb-search span { margin-left: 18px; flex: 1; }
.promo { width: 108px; height: 48px; border-radius: 10px; background: #e2e2e2; display: flex; align-items: center; justify-content: center; }
.task { width: 61px; flex: none; display: flex; align-items: center; justify-content: center; }
.tv { width: 76px; padding-right: 4px; }
.run { background: linear-gradient(#76b9ed, #76b9ed) center bottom / 47px 3px no-repeat; }
.pair { background: linear-gradient(90deg, #76b9ed 33px, #47799f 33px 35px, #5c92bd 35px) center bottom / 47px 3px no-repeat; }
.chrome { background: linear-gradient(#76b9ed, #76b9ed) 2px bottom / 59px 3px no-repeat, linear-gradient(90deg, #4a565b 52px, #303f44 52px 54px, #39474b 54px) 2px 0 / 59px 60px no-repeat; padding-right: 6px; }
.help { padding-left: 8px; width: 66px; }
.weather { display: flex; align-items: center; width: 136px; margin-left: 17px; font-size: 21px; }
.weather span { margin-left: 11px; letter-spacing: -.8px; }
.tray { display: flex; align-items: center; gap: 12.500px; margin-left: auto; font-size: 18px; }
.lang { letter-spacing: -.5px; margin-left: 5px; }
.clock { display: flex; flex-direction: column; align-items: center; width: 84px; margin-left: 20px; font-size: 18px; line-height: 28px; padding-top: 2px; letter-spacing: -.2px; }
.notif { width: 42px; margin: 0 13px 0 28px; padding-top: 18px; position: relative; }
.notif b { position: absolute; left: 10px; top: 28px; width: 28px; height: 28px; border: 1.500px solid #8b9092; border-radius: 50%; background: #2c3133; font-size: 16px; line-height: 25px; text-align: center; letter-spacing: -.5px; }
.peek { width: 1px; background: #6a7072; margin: 0 7px 0 -1px; }
```
